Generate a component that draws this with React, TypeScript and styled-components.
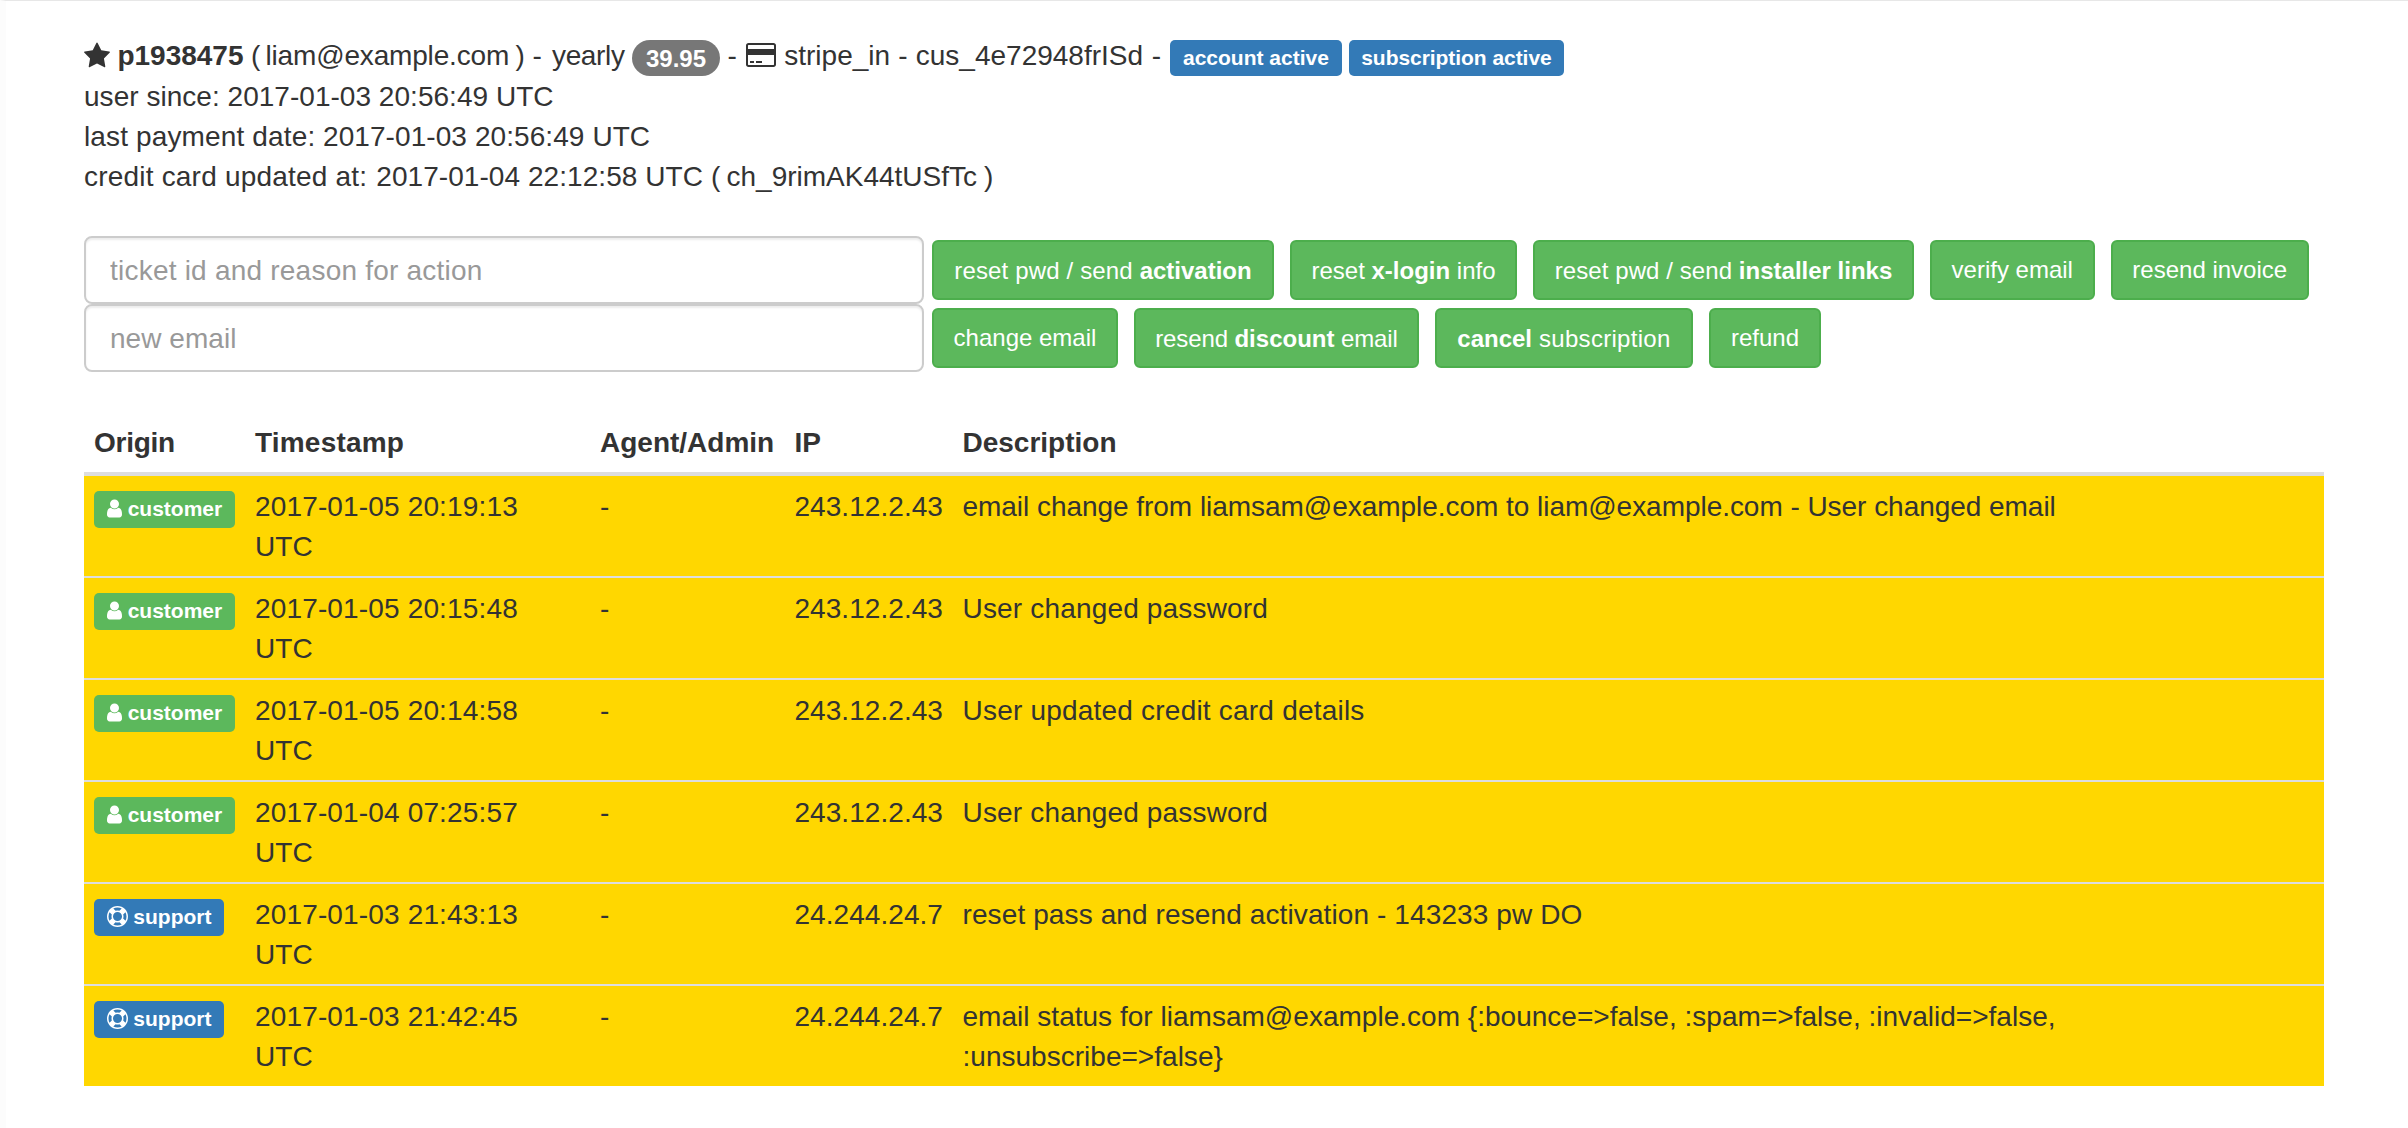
import React from "react";
import styled, { createGlobalStyle } from "styled-components";

const GlobalStyle = createGlobalStyle`
  * { box-sizing: border-box; }
  body {
    margin: 0;
    background: #fff;
    color: #333;
    font: 28px/40px "Liberation Sans", Arial, sans-serif;
  }
`;

const Page = styled.div`
  min-height: 1128px;
  padding: 35px 84px 0 78px;
  border-top: 1px solid #e7e7e7;
  border-left: 6px solid #fcfcfc;
`;

const Line = styled.div`
  display: flex;
  height: 40px;
  line-height: 42px;
  white-space: pre;
`;

const AccountLine = styled(Line)`
  line-height: 40px;
`;

const Run = styled.span<{ $w?: number; $track?: number; $bold?: boolean }>`
  flex: none;
  width: ${(p) => (p.$w ? `${p.$w}px` : "auto")};
  letter-spacing: ${(p) => p.$track ?? 0}px;
  font-weight: ${(p) => (p.$bold ? 700 : 400)};
`;

const Glyph = styled.svg<{ $w: number; $h: number; $top: number; $gap: number }>`
  flex: none;
  width: ${(p) => p.$w}px;
  height: ${(p) => p.$h}px;
  margin-top: ${(p) => p.$top}px;
  margin-right: ${(p) => p.$gap}px;
  fill: currentColor;
`;

const Badge = styled.span`
  flex: none;
  width: 88px;
  height: 36px;
  margin: 4px 7.4px 0 0;
  border-radius: 18px;
  background: #777;
  color: #fff;
  font-size: 24px;
  font-weight: 700;
  line-height: 37px;
  text-align: center;
`;

const Label = styled.span<{ $tone: "primary" | "success"; $w: number; $h?: number; $track?: number }>`
  display: flex;
  flex: none;
  justify-content: center;
  width: ${(p) => p.$w}px;
  height: ${(p) => p.$h ?? 36}px;
  border-radius: 5px;
  background: ${(p) => (p.$tone === "primary" ? "#337ab7" : "#5cb85c")};
  color: #fff;
  font-size: 21px;
  font-weight: 700;
  line-height: 36px;
  letter-spacing: ${(p) => p.$track ?? 0}px;
`;

const LabelGroup = styled.span`
  display: flex;
  gap: 7px;
  padding-top: 4px;
`;

const Actions = styled.div`
  margin-top: 40px;
`;

const ActionRow = styled.form`
  display: flex;
  align-items: center;
  gap: 16px;
  height: 68px;
`;

const Field = styled.input<{ $track: number }>`
  width: 840px;
  height: 68px;
  margin-right: -8px;
  padding: 13px 24px 11px;
  border: 2px solid #ccc;
  border-radius: 8px;
  background: #fff;
  box-shadow: inset 0 2px 2px rgba(0, 0, 0, 0.075);
  font: inherit;
  letter-spacing: ${(p) => p.$track}px;
  &::placeholder {
    color: #999;
    opacity: 1;
  }
`;

const Button = styled.button<{ $w: number; $track?: number; $drop?: number }>`
  width: ${(p) => p.$w}px;
  height: 60px;
  padding: ${(p) => p.$drop ?? 0}px 0 0;
  border: 2px solid #4cae4c;
  border-radius: 6px;
  background: #5cb85c;
  color: #fff;
  font: 24px/36px "Liberation Sans", Arial, sans-serif;
  letter-spacing: ${(p) => p.$track ?? 0}px;
  white-space: nowrap;
  b {
    letter-spacing: 0;
  }
`;

const Table = styled.div`
  margin-top: 40px;
`;

const Row = styled.div`
  display: grid;
  grid-template-columns: 161px 345px 194.5px 168px 1120px 1fr;
  & > * {
    padding: 11px 10px 9px;
  }
`;

const HeadRow = styled(Row)`
  height: 64px;
  border-bottom: 4px solid #ddd;
  font-weight: 700;
`;

const BodyRow = styled(Row)`
  min-height: 100px;
  background: #ffd700;
  & + & {
    border-top: 2px solid #ddd;
  }
`;

const Cell = styled.div<{ $track?: number }>`
  letter-spacing: ${(p) => p.$track ?? 0}px;
`;

const OriginCell = styled(Cell)`
  && {
    padding-top: 15px;
  }
`;

const Stamp = styled(Cell)`
  && {
    padding-right: 60px;
  }
`;

const STAR =
  "M1664 647q0 22-26 48l-363 354 86 500q1 7 1 20 0 21-10.5 35.5t-30.5 14.500q-19 0-40-12l-449-236-449 236q-22 12-40 12-21 0-31.500-14.500t-10.500-35.500q0-6 2-20l86-500-364-354q-25-27-25-48 0-37 56-46l502-73 225-455q19-41 49-41t49 41l225 455 502 73q56 9 56 46z";
const CARD =
  "M1760 128q66 0 113 47t47 113v1216q0 66-47 113t-113 47h-1600q-66 0-113-47t-47-113v-1216q0-66 47-113t113-47h1600zM160 256q-13 0-22.500 9.500t-9.500 22.500v224h1664v-224q0-13-9.500-22.500t-22.500-9.500h-1600zM1760 1536q13 0 22.500-9.500t9.500-22.500v-608h-1664v608q0 13 9.500 22.500t22.500 9.500h1600zM256 1408v-128h256v128h-256zM640 1408v-128h384v128h-384z";
const USER =
  "M1280 1399q0 109-62.500 187t-150.500 78h-854q-88 0-150.500-78t-62.500-187q0-85 8.500-160.500t31.500-152 58.500-131 94-89 134.500-34.500q131 128 313 128t313-128q76 0 134.500 34.500t94 89 58.500 131 31.500 152 8.500 160.500zm-256-887q0 159-112.500 271.500t-271.500 112.500-271.500-112.500-112.500-271.500 112.500-271.500 271.500-112.500 271.500 112.500 112.500 271.500z";
const RING =
  "M896 0q182 0 348 71t286 191 191 286 71 348-71 348-191 286-286 191-348 71-348-71-286-191-191-286-71-348 71-348 191-286 286-191 348-71zm0 128q-190 0-361 90l194 194q82-28 167-28t167 28l194-194q-171-90-361-90zm-678 1129l194-194q-28-82-28-167t28-167l-194-194q-90 171-90 361t90 361zm678 407q190 0 361-90l-194-194q-82 28-167 28t-167-28l-194 194q171 90 361 90zm0-384q159 0 271.500-112.500t112.500-271.500-112.500-271.500-271.500-112.500-271.500 112.500-112.500 271.500 112.500 271.500 271.500 112.500zm484-217l194 194q90-171 90-361t-90-361l-194 194q28 82 28 167t-28 167z";

function OriginLabel({ kind }: { kind: "customer" | "support" }) {
  return kind === "customer" ? (
    <Label $tone="success" $w={141} $h={37}>
      <Glyph $w={15} $h={21} $top={6.5} $gap={5.8} viewBox="0 0 1280 1792">
        <path d={USER} />
      </Glyph>
      customer
    </Label>
  ) : (
    <Label $tone="primary" $w={130} $h={37}>
      <Glyph $w={21} $h={21} $top={7} $gap={5.8} viewBox="0 0 1792 1792">
        <path d={RING} />
      </Glyph>
      support
    </Label>
  );
}

type Entry = {
  origin: "customer" | "support";
  time: string;
  ip: string;
  text: string;
  track: number;
};

const entries: Entry[] = [
  {
    origin: "customer",
    time: "2017-01-05 20:19:13 UTC",
    ip: "243.12.2.43",
    text: "email change from liamsam@example.com to liam@example.com - User changed email",
    track: -0.04,
  },
  { origin: "customer", time: "2017-01-05 20:15:48 UTC", ip: "243.12.2.43", text: "User changed password", track: 0.17 },
  { origin: "customer", time: "2017-01-05 20:14:58 UTC", ip: "243.12.2.43", text: "User updated credit card details", track: 0.21 },
  { origin: "customer", time: "2017-01-04 07:25:57 UTC", ip: "243.12.2.43", text: "User changed password", track: 0.17 },
  {
    origin: "support",
    time: "2017-01-03 21:43:13 UTC",
    ip: "24.244.24.7",
    text: "reset pass and resend activation - 143233 pw DO",
    track: 0.11,
  },
  {
    origin: "support",
    time: "2017-01-03 21:42:45 UTC",
    ip: "24.244.24.7",
    text: "email status for liamsam@example.com {:bounce=>false, :spam=>false, :invalid=>false, :unsubscribe=>false}",
    track: 0.02,
  },
];

export default function App() {
  return (
    <>
      <GlobalStyle />
      <Page>
        <AccountLine>
          <Glyph $w={26} $h={28} $top={5.5} $gap={7.4} viewBox="0 0 1664 1792">
            <path d={STAR} />
          </Glyph>
          <Run $w={133.6} $bold>p1938475</Run>
          <Run $w={14.5}>(</Run>
          <Run $w={250} $track={-0.17}>liam@example.com</Run>
          <Run $w={17}>)</Run>
          <Run $w={19.5}>-</Run>
          <Run $w={80} $track={-0.35}>yearly</Run>
          <Badge>39.95</Badge>
          <Run $w={18.9}>-</Run>
          <Glyph $w={30} $h={28} $top={5} $gap={8} viewBox="0 0 1920 1792">
            <path d={CARD} />
          </Glyph>
          <Run $w={114}>stripe_in</Run>
          <Run $w={17.5}>-</Run>
          <Run $w={236}>cus_4e72948frISd</Run>
          <Run $w={18.2}>-</Run>
          <LabelGroup>
            <Label $tone="primary" $w={172}>account active</Label>
            <Label $tone="primary" $w={215} $track={-0.05}>subscription active</Label>
          </LabelGroup>
        </AccountLine>
        <Line>
          <Run $track={0.03}>user since: 2017-01-03 20:56:49 UTC</Run>
        </Line>
        <Line>
          <Run $w={239} $track={0.14}>last payment date:</Run>
          <Run $track={0.08}>2017-01-03 20:56:49 UTC</Run>
        </Line>
        <Line>
          <Run $w={292.3} $track={0.2}>credit card updated at:</Run>
          <Run $w={334.7} $track={0.06}>2017-01-04 22:12:58 UTC</Run>
          <Run $w={15.5}>(</Run>
          <Run $w={257.5}>ch_9rimAK44tUSfTc</Run>
          <Run>)</Run>
        </Line>

        <Actions>
          <ActionRow>
            <Field $track={0.22} placeholder="ticket id and reason for action" />
            <Button type="button" $w={342} $track={0.15} $drop={2}>
              reset pwd / send <b>activation</b>
            </Button>
            <Button type="button" $w={227} $drop={2}>
              reset <b>x-login</b> info
            </Button>
            <Button type="button" $w={381} $track={0.08} $drop={2}>
              reset pwd / send <b>installer links</b>
            </Button>
            <Button type="button" $w={164.5}>verify email</Button>
            <Button type="button" $w={198.5}>resend invoice</Button>
          </ActionRow>
          <ActionRow>
            <Field $track={0.05} placeholder="new email" />
            <Button type="button" $w={186}>change email</Button>
            <Button type="button" $w={285} $track={-0.12} $drop={2}>
              resend <b>discount</b> email
            </Button>
            <Button type="button" $w={258} $track={0.3} $drop={2}>
              <b>cancel</b> subscription
            </Button>
            <Button type="button" $w={112}>refund</Button>
          </ActionRow>
        </Actions>

        <Table>
          <HeadRow>
            <Cell $track={-0.25}>Origin</Cell>
            <Cell $track={0.2}>Timestamp</Cell>
            <Cell>Agent/Admin</Cell>
            <Cell>IP</Cell>
            <Cell>Description</Cell>
          </HeadRow>
          {entries.map((e) => (
            <BodyRow key={e.time}>
              <OriginCell>
                <OriginLabel kind={e.origin} />
              </OriginCell>
              <Stamp $track={0.15}>{e.time}</Stamp>
              <Cell>-</Cell>
              <Cell $track={0.05}>{e.ip}</Cell>
              <Cell $track={e.track}>{e.text}</Cell>
            </BodyRow>
          ))}
        </Table>
      </Page>
    </>
  );
}
